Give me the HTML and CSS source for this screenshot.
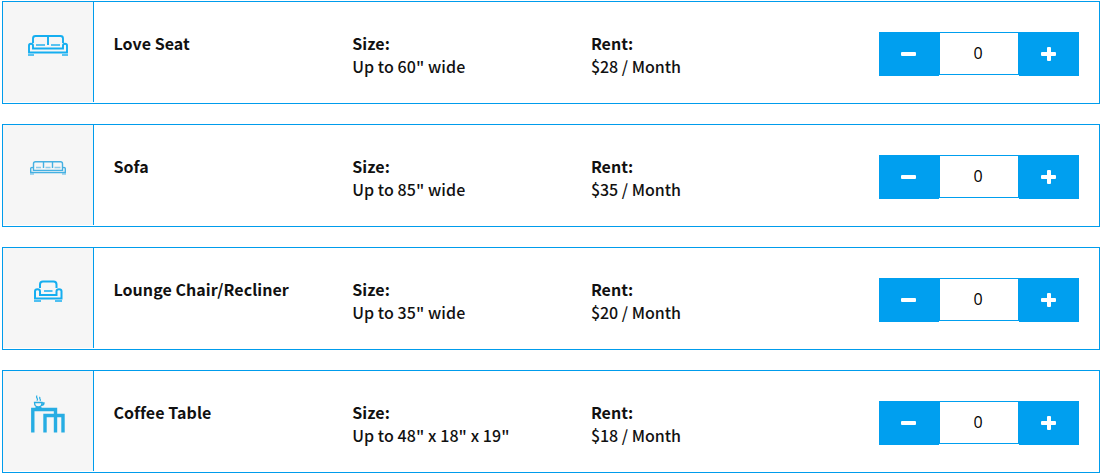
FILE: index.html
```html
<!DOCTYPE html>
<html lang="en">
<head>
    <meta charset="UTF-8">
    <meta name="viewport" content="width=device-width, initial-scale=1.0">
    <title>Furniture Storage</title>
    <link rel="stylesheet" href="styles.css">
</head>
<body>

<div class="items">
    <!-- Love Seat -->
    <div class="item">
        <div class="item-icon">
            <svg viewBox="0 0 60 60" fill="none" stroke="#15aef0" stroke-width="1.9">
                <path d="M15 28v-4.500q0-2.500 2.500-2.500h25q2.500 0 2.500 2.500V28M30 21v9"/>
                <path d="M11 37.500V30.600q0-1.800 2-1.800t2 1.800v2.900h30v-2.900q0-1.800 2-1.800t2 1.800v6.900z"/>
                <path d="M18 30h9M33 30h9M10 40h6M44 40h6" opacity=".7"/>
            </svg>
        </div>
        <div class="item-name"><strong>Love Seat</strong></div>
        <div class="item-col size"><strong>Size:</strong><br>Up to 60" wide</div>
        <div class="item-col"><strong>Rent:</strong><br>$28 / Month</div>
        <div class="counter">
            <button class="btn minus" aria-label="Remove"></button>
            <input type="text" class="qty" value="0">
            <button class="btn plus" aria-label="Add"></button>
        </div>
    </div>

    <!-- Sofa -->
    <div class="item">
        <div class="item-icon">
            <svg viewBox="0 0 60 60" fill="none" stroke="#45b0e2" stroke-width="1.4">
                <path d="M15.5 30v-4.200q0-2 2-2h25q2 0 2 2V30M25.500 24v6M34.500 24v6"/>
                <path d="M12.700 34.500v-4q0-1.100 1.400-1.100t1.400 1.100v1.900h29v-1.900q0-1.100 1.400-1.100t1.400 1.100v4z"/>
                <path d="M18 29.500h5M27.500 29.500h5M36.500 29.500h6M12 36h4M44 36h4" opacity=".6"/>
            </svg>
        </div>
        <div class="item-name"><strong>Sofa</strong></div>
        <div class="item-col size"><strong>Size:</strong><br>Up to 85" wide</div>
        <div class="item-col"><strong>Rent:</strong><br>$35 / Month</div>
        <div class="counter">
            <button class="btn minus" aria-label="Remove"></button>
            <input type="text" class="qty" value="0">
            <button class="btn plus" aria-label="Add"></button>
        </div>
    </div>

    <!-- Lounge Chair -->
    <div class="item">
        <div class="item-icon">
            <svg viewBox="0 0 60 60" fill="none" stroke="#15aef0" stroke-width="2">
                <path d="M22 27v-3.500q0-3 3-3h10.500q3 0 3 3V27"/>
                <path d="M17 37.600v-7.300q0-2 2.500-2t2.500 2v3.700h16.500v-3.700q0-2 2.500-2t2.500 2v7.300z"/>
                <path d="M26 30h8.500M16 40h7M37 40h7" opacity=".75"/>
            </svg>
        </div>
        <div class="item-name"><strong>Lounge Chair/Recliner</strong></div>
        <div class="item-col size"><strong>Size:</strong><br>Up to 35" wide</div>
        <div class="item-col"><strong>Rent:</strong><br>$20 / Month</div>
        <div class="counter">
            <button class="btn minus" aria-label="Remove"></button>
            <input type="text" class="qty" value="0">
            <button class="btn plus" aria-label="Add"></button>
        </div>
    </div>

    <!-- Coffee Table -->
    <div class="item">
        <div class="item-icon">
            <svg viewBox="0 0 60 60" fill="none" stroke="#27ade3">
                <path d="M14.800 48.500v-23h22.700v23M27 48.500v-17h18v17" stroke-width="3.400"/>
                <path d="M16.500 18.500h7.500q0 4.500-3.700 4.500t-3.800-4.500zM24 19h2q0 2.400-2.500 2.400M17.500 23.700h6" stroke-width="1.300"/>
                <path d="M19 11.500q-1 1.300 0 2.500t0 2.800M22 12.800q-.8 1 0 2t0 2" stroke-width="1.200"/>
            </svg>
        </div>
        <div class="item-name"><strong>Coffee Table</strong></div>
        <div class="item-col size"><strong>Size:</strong><br>Up to 48" x 18" x 19"</div>
        <div class="item-col"><strong>Rent:</strong><br>$18 / Month</div>
        <div class="counter">
            <button class="btn minus" aria-label="Remove"></button>
            <input type="text" class="qty" value="0">
            <button class="btn plus" aria-label="Add"></button>
        </div>
    </div>
</div>

<script>
    // Quantity buttons
    document.querySelectorAll('.counter').forEach(counter => {
        const qty = counter.querySelector('.qty');
        counter.querySelector('.minus').addEventListener('click', () => {
            qty.value = Math.max(0, Number(qty.value) - 1);
        });
        counter.querySelector('.plus').addEventListener('click', () => {
            qty.value = Number(qty.value) + 1;
        });
    });
</script>

</body>
</html>
```
FILE: styles.css
```css
* {
    box-sizing: border-box;
}
body {
    margin: 0;
    padding: 1px 2px;
    background-color: #fff;
    color: #111;
    font-family: "Noto Sans CJK SC", sans-serif;
    font-size: 16px;
    font-weight: 500;
    line-height: 23px;
}
.items {
    display: flex;
    flex-direction: column;
    gap: 20px;
}
.item {
    display: flex;
    height: 103px;
    border: 1px solid #009cec;
}
.item-icon {
    width: 91px;
    height: 100px;
    padding: 13px 15px;
    background-color: #f6f6f6;
    border-right: 1px solid #009cec;
}
.item-icon svg {
    display: block;
    width: 60px;
    height: 60px;
}
.item-name,
.item-col {
    width: 238.7px;
    padding-top: 30px;
    white-space: nowrap;
}
.item-name {
    margin-left: 19.5px;
    letter-spacing: 0.05px;
}
.size {
    letter-spacing: 0.08px;
}
.item strong {
    font-weight: 700;
}
.counter {
    display: flex;
    align-items: flex-start;
    margin-left: auto;
    padding: 30px 20px 0 0;
}
.btn {
    position: relative;
    width: 60px;
    height: 44px;
    padding: 0;
    border: 0;
    background-color: #009fef;
    cursor: pointer;
}
.btn::before,
.plus::after {
    content: "";
    position: absolute;
    left: 22px;
    top: 20px;
    width: 15px;
    height: 4px;
    border-radius: 1px;
    background-color: #fff;
}
.plus::after {
    left: 28px;
    top: 15px;
    width: 4px;
    height: 14px;
}
.qty {
    width: 80px;
    height: 43px;
    padding: 0 2px 2px 0;
    border: 1px solid #009fef;
    border-radius: 0;
    background-color: #fff;
    color: #000;
    font-family: "Open Sans", sans-serif;
    font-size: 16px;
    font-weight: 400;
    text-align: center;
}
```
